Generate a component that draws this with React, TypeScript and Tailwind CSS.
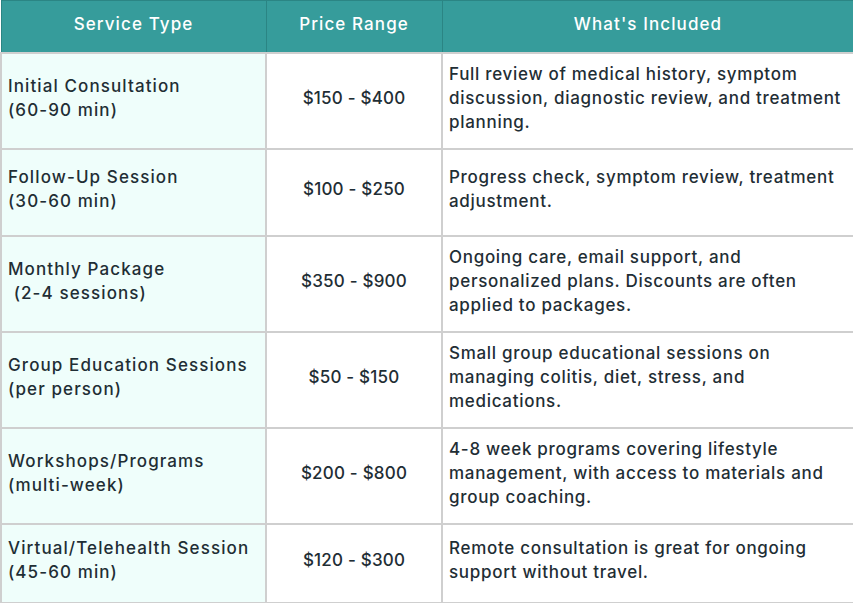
const rows = [
  {
    service: ["Initial Consultation", "(60-90 min)"],
    price: "$150 - $400",
    included: "Full review of medical history, symptom discussion, diagnostic review, and treatment planning.",
    h: "h-[96px]",
  },
  {
    service: ["Follow-Up Session", "(30-60 min)"],
    price: "$100 - $250",
    included: "Progress check, symptom review, treatment adjustment.",
    h: "h-[87px]",
  },
  {
    service: ["Monthly Package", "\u00a0(2-4 sessions)"],
    price: "$350 - $900",
    included: "Ongoing care, email support, and personalized plans. Discounts are often applied to packages.",
    h: "h-[96px]",
  },
  {
    service: ["Group Education Sessions", "(per person)"],
    price: "$50 - $150",
    included: "Small group educational sessions on managing colitis, diet, stress, and medications.",
    h: "h-[96px]",
  },
  {
    service: ["Workshops/Programs", "(multi-week)"],
    price: "$200 - $800",
    included: "4-8 week programs covering lifestyle management, with access to materials and group coaching.",
    h: "h-[96px]",
  },
  {
    service: ["Virtual/Telehealth Session", "(45-60 min)"],
    price: "$120 - $300",
    included: "Remote consultation is great for ongoing support without travel.",
    h: "h-[79px]",
  },
];

export default function App() {
  return (
    <div className="w-[853px] h-[603px] bg-white font-['Inter',sans-serif]">
      <table className="w-[853px] table-fixed border-collapse text-[17px] leading-[24px] tracking-[0.9px] text-[#1f2e35] font-medium">
        <colgroup>
          <col className="w-[265px]" />
          <col className="w-[176px]" />
          <col className="w-[412px]" />
        </colgroup>
        <thead>
          <tr className="h-[52px] bg-[#369c9b] text-white text-[17px] tracking-[1.1px]">
            <th className="border border-[#2b8584] pb-[5px] font-medium">Service Type</th>
            <th className="border border-[#2b8584] pb-[5px] font-medium">Price Range</th>
            <th className="border border-[#2b8584] pb-[5px] font-medium">What's Included</th>
          </tr>
        </thead>
        <tbody>
          {rows.map((r) => (
            <tr key={r.price + r.service[0]} className={r.h}>
              <td className="border-2 border-[#cfcfcf] bg-[#effefb] px-[6px] pb-[6px] tracking-[1.1px] align-middle">
                {r.service[0]}
                <br />
                {r.service[1]}
              </td>
              <td className="border-2 border-[#cfcfcf] pb-[6px] text-center tracking-[0.2px] align-middle">{r.price}</td>
              <td className="border-2 border-[#cfcfcf] pl-[6px] pr-[4px] pb-[6px] tracking-[0.7px] align-middle">{r.included}</td>
            </tr>
          ))}
        </tbody>
      </table>
    </div>
  );
}
